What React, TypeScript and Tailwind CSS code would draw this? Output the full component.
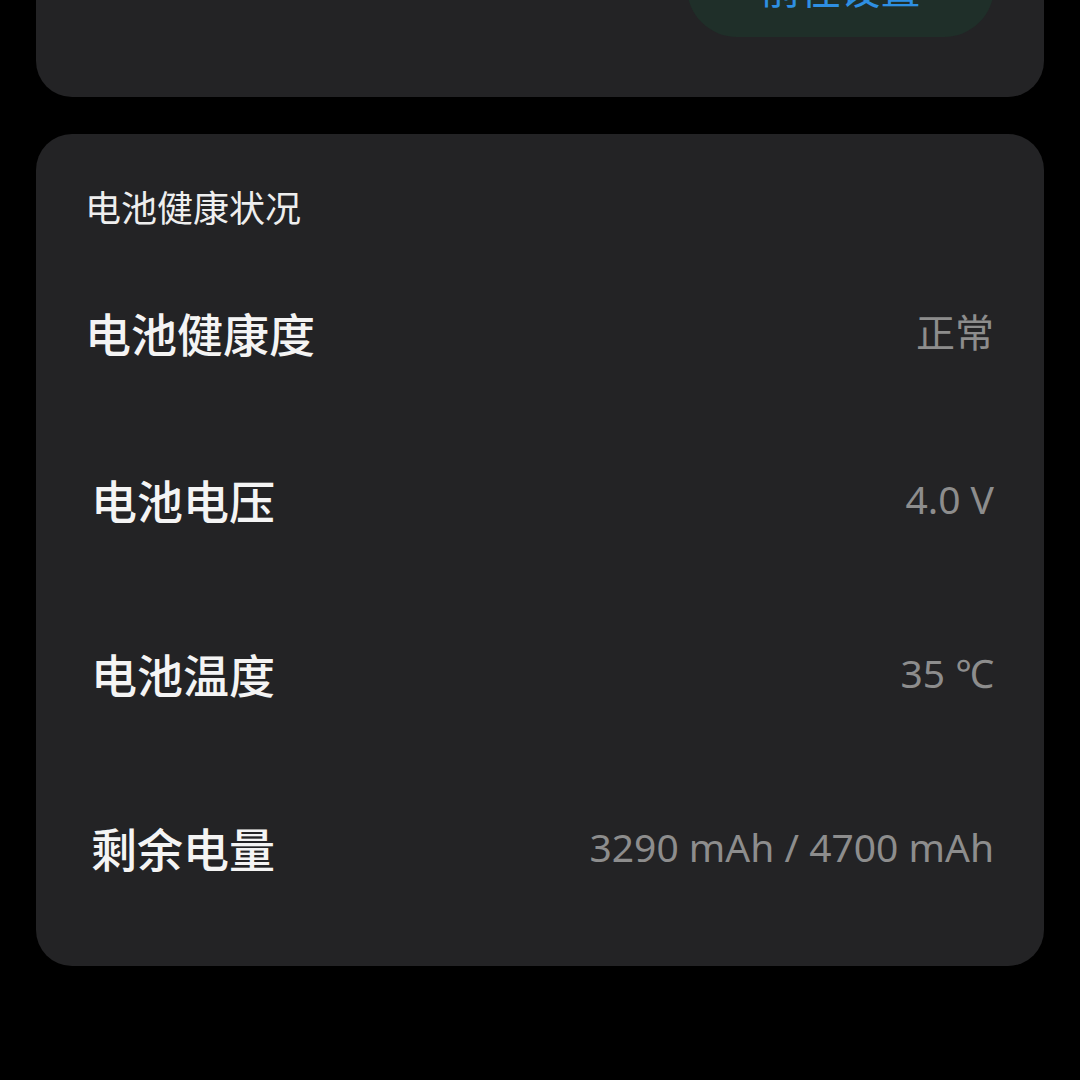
import React from "react";

const cjk = { fontFamily: '"Noto Sans CJK SC", "Noto Sans", sans-serif' };

function Row({ label, value, indent, h }: { label: string; value: string; indent?: boolean; h: string }) {
  return (
    <div className={`flex items-center justify-between ${h}`}>
      <div className={`text-[46px] leading-none font-medium text-[#f4f4f4] ${indent ? "pl-[6px]" : ""}`}>{label}</div>
      <div className="text-[39px] leading-none text-[#8d8d8d] -mt-[2px]" style={{ fontFamily: '"Noto Sans", "Noto Sans CJK SC", sans-serif' }}>
        {value}
      </div>
    </div>
  );
}

export default function App() {
  return (
    <div className="w-[1080px] h-[1080px] bg-black overflow-hidden px-[36px]" style={cjk}>
      <div className="-mt-[63px] rounded-b-[36px] bg-[#232325] flex justify-end pr-[50px] pb-[60px]">
        <div className="w-[307px] h-[100px] rounded-full bg-[#1f2f29] flex items-center justify-center text-[40px] leading-none text-[#2e8fe2]">
          前往设置
        </div>
      </div>
      <div className="mt-[37px] rounded-[36px] bg-[#232325] pt-[54px] pb-[32px] pl-[49px] pr-[50px]">
        <div className="text-[36px] leading-[36px] text-[#eeeeee]">电池健康状况</div>
        <div className="mt-[28px] flex flex-col">
          <Row label="电池健康度" value="正常" h="h-[160px]" />
          <Row label="电池电压" value="4.0 V" indent h="h-[174px]" />
          <Row label="电池温度" value="35 ℃" indent h="h-[174px]" />
          <Row label="剩余电量" value="3290 mAh / 4700 mAh" indent h="h-[174px]" />
        </div>
      </div>
    </div>
  );
}
